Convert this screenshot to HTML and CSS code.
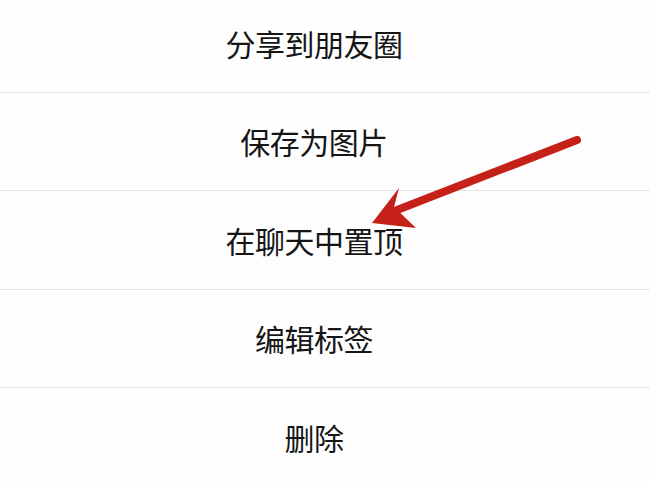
FILE: index.html
```html
<!DOCTYPE html>
<html lang="zh-CN">
<head>
<meta charset="utf-8">
<title>菜单</title>
<link rel="stylesheet" href="styles.css">
</head>
<body>
<div class="page">
  <ul class="menu">
    <li class="item">分享到朋友圈</li>
    <li class="item">保存为图片</li>
    <li class="item">在聊天中置顶</li>
    <li class="item">编辑标签</li>
    <li class="item">删除</li>
  </ul>
  <svg class="arrow" width="650" height="482" viewBox="0 0 650 482" aria-hidden="true">
    <line x1="577" y1="140" x2="392" y2="212" stroke="#c62119" stroke-width="8" stroke-linecap="round"/>
    <path d="M372 223 L399 188 L394 207 L416 228 Z" fill="#c62119"/>
  </svg>
</div>
</body>
</html>
```
FILE: styles.css
```css
html, body {
  margin: 0;
  padding: 0;
  background: #ffffff;
}
.page {
  position: relative;
  width: 650px;
  height: 482px;
  overflow: hidden;
  background: #fefefe;
}
.menu {
  list-style: none;
  margin: -6px 0 0 0;
  padding: 0;
  display: flex;
  flex-direction: column;
}
.item {
  height: 97.5px;
  padding-right: 22px;
  border-bottom: 1px solid #e6e6e6;
  display: flex;
  align-items: center;
  justify-content: center;
  font-family: "Noto Sans CJK SC", "Noto Sans", sans-serif;
  font-size: 30px;
  color: #151515;
  letter-spacing: -0.5px;
}
.menu .item:last-child {
  border-bottom: none;
}
.arrow {
  position: absolute;
  left: 0;
  top: 0;
  pointer-events: none;
}
```
